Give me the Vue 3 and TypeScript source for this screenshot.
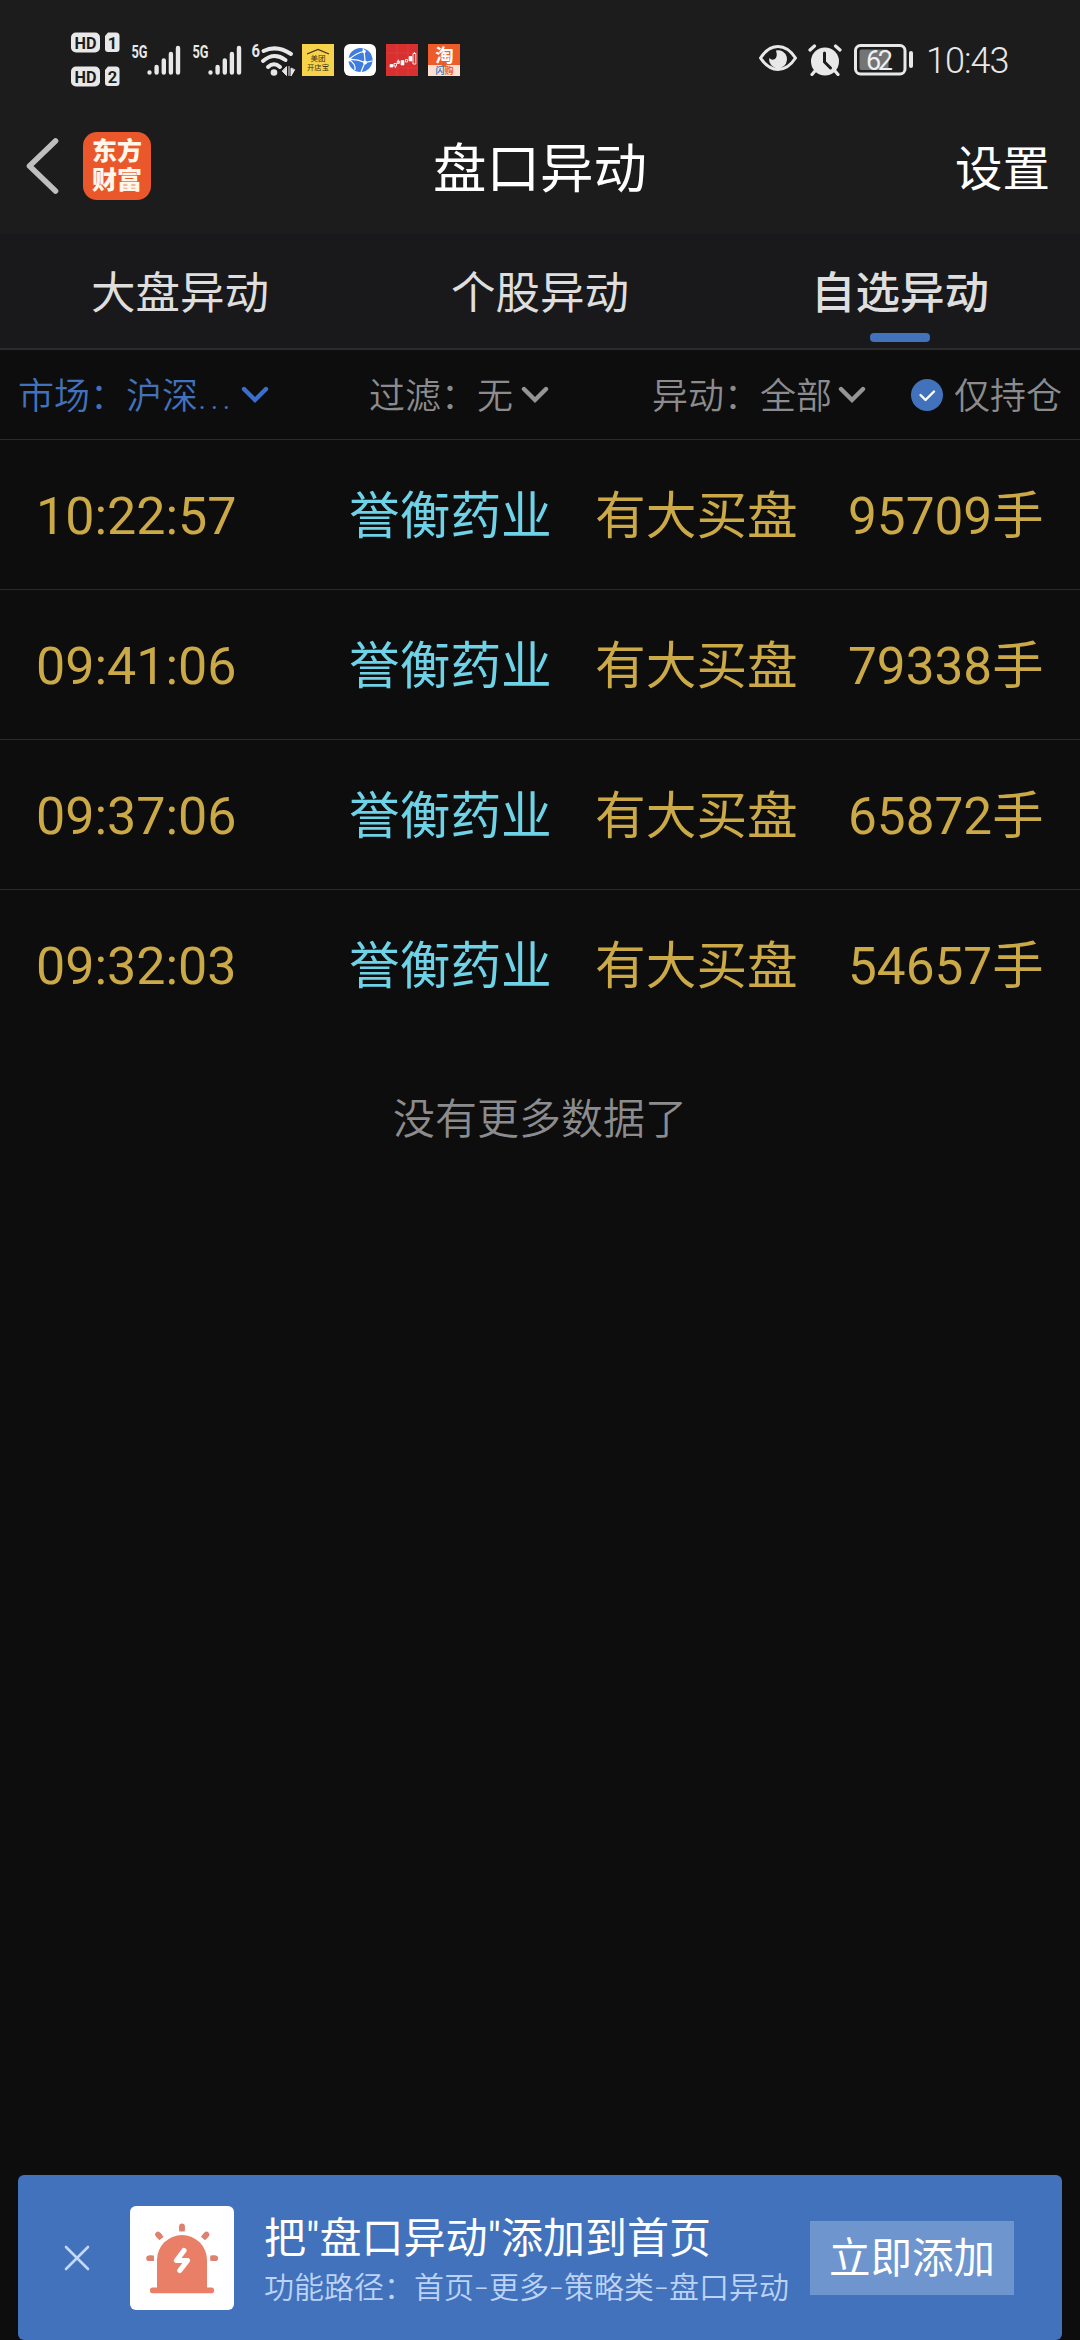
<script setup lang="ts">
interface Alert {
  time: string
  name: string
  kind: string
  volume: string
}

const tabs: string[] = ['大盘异动', '个股异动', '自选异动']
const activeTab = 2

const alerts: Alert[] = [
  { time: '10:22:57', name: '誉衡药业', kind: '有大买盘', volume: '95709手' },
  { time: '09:41:06', name: '誉衡药业', kind: '有大买盘', volume: '79338手' },
  { time: '09:37:06', name: '誉衡药业', kind: '有大买盘', volume: '65872手' },
  { time: '09:32:03', name: '誉衡药业', kind: '有大买盘', volume: '54657手' },
]
</script>

<template>
  <div class="screen">
    <div class="status">
      <svg class="sims" width="50" height="56" viewBox="0 0 50 56">
        <rect x="0" y="0.5" width="29" height="20" rx="5" />
        <path d="M34 4l3-3.500h8q3.500 0 3.500 3.500v13q0 3-3 3H37q-3 0-3-3z" />
        <rect x="0" y="34.500" width="29" height="20" rx="5" />
        <path d="M34 38l3-3.500h8q3.500 0 3.500 3.500v13q0 3-3 3H37q-3 0-3-3z" />
        <text x="14.500" y="16.500" textLength="22" lengthAdjust="spacingAndGlyphs">HD</text>
        <text x="41.500" y="16.500">1</text>
        <text x="14.500" y="50.500" textLength="22" lengthAdjust="spacingAndGlyphs">HD</text>
        <text x="41.500" y="50.500">2</text>
      </svg>
      <svg v-for="n in 2" :key="n" class="signal" width="61" height="40" viewBox="0 -6 61 40">
        <text x="0.5" y="15" textLength="16" lengthAdjust="spacingAndGlyphs">5G</text>
        <path d="M18.500 30.400v.1M25.600 25v5.500M32.800 18.500v12M39.900 12v18.500M47 6v24.500" />
      </svg>
      <svg class="wifi" width="46" height="40" viewBox="0 -6 46 40">
        <text x="0.5" y="14" textLength="8.500" lengthAdjust="spacingAndGlyphs">6</text>
        <path d="M12.500 8Q26 1.500 40 11M12 18Q23 8.500 34.500 17M17 24Q23 18.500 29 24" />
        <circle cx="23" cy="29.500" r="3.300" />
        <path class="arrows" d="M35.500 24v8.500l-4-4.200zM38 23.500v9M40 25.500v7.500l3.500-6z" />
      </svg>
      <div class="apps">
        <svg width="32" height="32" viewBox="0 0 32 32">
          <rect width="32" height="32" fill="#f7d34b" />
          <path d="M5 10L16 5.500L27 10" fill="none" stroke="#433413" stroke-width="1.300" />
          <g fill="#433413" font-size="7.200">
            <text x="8.500" y="17.200" textLength="15" lengthAdjust="spacingAndGlyphs">美团</text>
            <text x="5" y="25.500" textLength="22" lengthAdjust="spacingAndGlyphs">开店宝</text>
          </g>
        </svg>
        <svg width="32" height="32" viewBox="0 0 32 32">
          <rect width="32" height="32" rx="6" fill="#fff" />
          <circle cx="16.500" cy="16" r="12" fill="#3f7de0" />
          <path d="M19 4.500L20 7.500Q21 14 21 18.500L17 28M5 15.500Q13 15 21 18.500L28 17M20 7.500Q12 9 5 15.500Q12 20 11 26" fill="none" stroke="#fff" stroke-width="1.200" />
          <circle cx="20" cy="7.500" r="1.800" fill="#fff" />
          <circle cx="5.500" cy="15.500" r="2" fill="#fff" />
          <circle cx="21" cy="18.500" r="2" fill="#fff" />
        </svg>
        <svg width="32" height="32" viewBox="0 0 32 32">
          <rect width="32" height="32" fill="#d7302f" />
          <path d="M0 9h32M0 24h32M11 0v32M22 0v32" stroke="#df4b48" stroke-width="0.500" />
          <path d="M4 20.500h3v2.500H4zM12.500 15.500V19M15 16.500h3V21h-3zM23 12.500h3V17h-3z" fill="#fff" stroke="#fff" stroke-width="0.700" />
          <path d="M8 19.500h2.500V22H8zM9.300 22v2M11.300 17h2v2.500h-2zM19.500 15.500h2V18h-2zM27 9.500h2.800v10.500H27zM28.400 8v1.500" fill="none" stroke="#fff" stroke-width="0.900" />
        </svg>
        <svg width="32" height="32" viewBox="0 0 32 32">
          <rect width="32" height="32" fill="#ec5b28" />
          <path d="M0 21h13l3 2l3-2h13v11H0z" fill="#fbe0d2" />
          <g text-anchor="middle" font-weight="700">
            <text x="16.500" y="18" font-size="18.500" fill="#fff">淘</text>
            <text x="12" y="30.300" font-size="9" fill="#4a7fc0">闪</text>
            <text x="21" y="30.300" font-size="9" fill="#e8602c">购</text>
          </g>
        </svg>
      </div>
      <div class="status-right">
        <svg width="38" height="28" viewBox="0 0 38 28">
          <path d="M1.500 14Q9 2.500 19 2.500T36.500 14Q29 25.500 19 25.500T1.500 14z" fill="none" stroke="#e8e8e8" stroke-width="3" />
          <path d="M17 6.500a9 9 0 1 1-6.500 11.500q-.8-2 0-4q2 2.500 5 1.200q3.500-2 1.500-8.700z" fill="#e8e8e8" />
        </svg>
        <svg class="alarm" width="34" height="32" viewBox="0 0 34 32">
          <circle cx="17" cy="17.500" r="14" fill="#e8e8e8" />
          <path d="M2 6L6.500 2M32 6L27.500 2M7 27l-3 3.500M27 27l3 3.500" stroke="#e8e8e8" stroke-width="3.200" stroke-linecap="round" />
          <path d="M16.500 9v9l6 6" fill="none" stroke="#1c1c1c" stroke-width="3" stroke-linecap="round" />
        </svg>
        <svg class="battery" width="60" height="32" viewBox="0 0 60 32">
          <rect x="1.500" y="1.500" width="49.500" height="28.500" rx="5" fill="none" stroke="#e8e8e8" stroke-width="3" />
          <rect x="5.500" y="5.500" width="29" height="20.500" rx="2" fill="#747474" />
          <rect x="55" y="7" width="4" height="17" rx="2" fill="#e8e8e8" />
          <text x="25.500" y="25.500" text-anchor="middle" textLength="27">62</text>
        </svg>
        <span class="clock">10:43</span>
      </div>
    </div>

    <header class="header">
      <div class="header-left">
        <svg class="back" width="33" height="58" viewBox="0 0 33 58">
          <path d="M29.500 4L3.500 29L29.500 54" fill="none" stroke="#bfbfbf" stroke-width="5.600" stroke-linecap="round" stroke-linejoin="round" />
        </svg>
        <div class="logo"><span>东方</span><span>财富</span></div>
      </div>
      <h1 class="title">盘口异动</h1>
      <div class="settings">设置</div>
    </header>

    <nav class="tabs">
      <div v-for="(tab, i) in tabs" :key="tab" class="tab" :class="{ active: i === activeTab }">{{ tab }}</div>
    </nav>

    <div class="filters">
      <div class="filter market">
        <span>市场：沪深<i>...</i></span>
        <svg class="chev" viewBox="0 0 28 18"><path d="M3 3l11 11L25 3" /></svg>
      </div>
      <div class="filter sift">
        <span>过滤：无</span>
        <svg class="chev" viewBox="0 0 28 18"><path d="M3 3l11 11L25 3" /></svg>
      </div>
      <div class="filter change">
        <span>异动：全部</span>
        <svg class="chev" viewBox="0 0 28 18"><path d="M3 3l11 11L25 3" /></svg>
      </div>
      <div class="filter held">
        <svg width="32" height="32" viewBox="0 0 32 32">
          <circle cx="16" cy="16" r="16" fill="#4272bb" />
          <path d="M9.500 16l5 5l8.500-8.500" fill="none" stroke="#fff" stroke-width="2.400" stroke-linecap="round" stroke-linejoin="round" />
        </svg>
        <span>仅持仓</span>
      </div>
    </div>

    <main class="list">
      <div v-for="row in alerts" :key="row.time" class="row">
        <span class="time">{{ row.time }}</span>
        <span class="name">{{ row.name }}</span>
        <span class="kind">{{ row.kind }}</span>
        <span class="volume">{{ row.volume }}</span>
      </div>
      <p class="end">没有更多数据了</p>
    </main>

    <footer class="banner">
      <svg class="close" width="26" height="26" viewBox="0 0 26 26">
        <path d="M2 2l22 22M24 2L2 24" stroke="#c3d8fb" stroke-width="2.600" stroke-linecap="round" />
      </svg>
      <svg class="siren" width="104" height="104" viewBox="0 0 104 104">
        <rect width="104" height="104" rx="6" fill="#fff" />
        <path d="M27 82V54a25 25 0 0 1 50 0v28z" fill="#e97f66" />
        <rect x="20" y="81.500" width="64" height="5.800" rx="2.500" fill="#e97f66" />
        <path d="M52 20.200v5.300M19 52.300h5M80.500 52.300h5M28 28.500l3.500 4M76.500 28.500l-3.500 4" stroke="#de8270" stroke-width="5.600" />
        <path d="M52 20.200v2M19 52.300h2M83 52.300h2.300M28 28.500l1 1M76.500 28.500l-1 1" stroke="#de8270" stroke-width="5.600" stroke-linecap="round" />
        <path d="M54 44.500L46.500 54.500H57.500L49.800 64.500" fill="none" stroke="#fff" stroke-width="5.200" stroke-linecap="round" stroke-linejoin="round" />
      </svg>
      <div class="copy">
        <div class="copy-title">把"盘口异动"添加到首页</div>
        <div class="copy-path">功能路径：首页<b>-</b>更多<b>-</b>策略类<b>-</b>盘口异动</div>
      </div>
      <button class="add">立即添加</button>
    </footer>
  </div>
</template>

<style>
body {
  background: #0d0d0d;
}
</style>

<style scoped>
.screen {
  display: flex;
  flex-direction: column;
  width: 1080px;
  height: 2340px;
  overflow: hidden;
  background: #0d0d0d;
  color: #dedede;
  font-family: Roboto, 'Noto Sans CJK SC', sans-serif;
}
svg {
  display: block;
  flex: none;
}
span {
  white-space: nowrap;
}

.status {
  display: flex;
  align-items: flex-start;
  box-sizing: border-box;
  height: 110px;
  padding: 32px 0 0 71px;
  background: #1c1c1c;
}
.sims rect,
.sims path {
  fill: #e8e8e8;
}
.sims text {
  fill: #1c1c1c;
  font-size: 16.500px;
  font-weight: 700;
  text-anchor: middle;
}
.signal,
.wifi {
  margin-top: 5px;
}
.sims {
  margin-right: 10px;
}
.signal text,
.wifi text {
  fill: #e8e8e8;
  font-size: 18px;
  font-weight: 700;
}
.signal path {
  stroke: #e8e8e8;
  stroke-width: 4.400;
  stroke-linecap: round;
  transform: translateY(-1px);
}
.wifi {
  margin-left: -2px;
}
.wifi path {
  fill: none;
  stroke: #e8e8e8;
  stroke-width: 4;
  stroke-linecap: round;
}
.wifi circle {
  fill: #e8e8e8;
}
.wifi .arrows {
  fill: #e8e8e8;
  stroke-width: 1;
}
.apps {
  display: flex;
  gap: 10px;
  margin: 12px 0 0 5px;
}
.status-right {
  display: flex;
  margin: 12px 72px 0 auto;
}
.alarm {
  margin-left: 11px;
}
.battery {
  margin-left: 12px;
}
.battery text {
  fill: #efefef;
  font-size: 27px;
}
.clock {
  width: 82px;
  margin-left: 12px;
  color: #e8e8e8;
  font-size: 36px;
  font-weight: 350;
  line-height: 34px;
  letter-spacing: -1px;
}

.header {
  display: grid;
  grid-template-columns: 1fr auto 1fr;
  align-items: center;
  height: 124px;
  background: #1c1c1c;
  color: #fff;
}
.header-left {
  display: flex;
  align-items: center;
  margin-top: -12px;
}
.back {
  margin-left: 26px;
}
.logo {
  display: flex;
  flex-direction: column;
  align-items: center;
  justify-content: center;
  width: 68px;
  height: 68px;
  margin-left: 24px;
  border-radius: 14px;
  background: #e9572a;
  color: #fff8ea;
  font-size: 25px;
  font-weight: 900;
  line-height: 29px;
}
.title {
  margin: 0 0 4px;
  font-size: 53.500px;
  font-weight: 400;
  line-height: 60px;
}
.settings {
  margin: 0 30px 4px 0;
  font-size: 47.500px;
  line-height: 60px;
  text-align: right;
}

.tabs {
  display: flex;
  height: 114px;
  border-bottom: 2px solid #2b2b2b;
  background: #19191b;
}
.tab {
  position: relative;
  flex: 1;
  font-size: 44.500px;
  line-height: 120px;
  text-align: center;
}
.tab.active {
  font-weight: 500;
}
.tab.active::after {
  content: '';
  position: absolute;
  left: 150px;
  bottom: 6px;
  width: 60px;
  height: 9px;
  border-radius: 4px;
  background: #4272bb;
}

.filters {
  display: flex;
  height: 89px;
  border-bottom: 1px solid #2b2b2b;
  color: #8c8c8e;
  font-size: 36px;
  font-weight: 350;
}
.filter {
  display: flex;
  align-items: center;
}
.filter span {
  margin-bottom: 3px;
}
.chev {
  width: 28px;
  height: 18px;
}
.chev path {
  fill: none;
  stroke: #959597;
  stroke-width: 4.400;
  stroke-linecap: round;
}
.market {
  width: 351px;
  padding-left: 18px;
  color: #4272bb;
}
.market i {
  font-style: normal;
  letter-spacing: 3.500px;
}
.market .chev {
  margin-left: 7px;
}
.market .chev path {
  stroke: #3a70cc;
}
.sift {
  width: 283px;
}
.sift .chev {
  margin-left: 8px;
}
.change {
  width: 259px;
}
.change .chev {
  margin-left: 6px;
}
.held span {
  margin-left: 11px;
}

.list {
  flex: 1;
}
.row {
  display: flex;
  box-sizing: border-box;
  height: 150px;
  border-bottom: 1px solid #2b2b2b;
  color: #cba947;
  font-size: 50.700px;
  line-height: 153px;
}
.row:nth-last-child(2) {
  border-bottom-color: transparent;
}
.time {
  width: 313px;
  padding-left: 36px;
  font-size: 52px;
}
.name {
  width: 246px;
  color: #6fd3e8;
}
.kind {
  width: 253px;
}
.volume {
  flex: 1;
  font-size: 51.300px;
}
.end {
  margin: 54px 0 0;
  color: #8c8c8e;
  font-size: 42px;
  font-weight: 350;
  line-height: 52px;
  text-align: center;
}

.banner {
  display: flex;
  align-items: center;
  box-sizing: border-box;
  height: 165px;
  margin: 0 18px;
  border-radius: 6px;
  background: #4272bb;
  color: #fff;
}
.close {
  margin-left: 46px;
}
.siren {
  margin-left: 40px;
}
.copy {
  flex: 1;
  margin-left: 30px;
  padding-top: 5px;
  white-space: nowrap;
}
.copy-title {
  font-size: 42px;
  line-height: 54px;
}
.copy-path {
  color: #bcd2f7;
  font-size: 30px;
  font-weight: 350;
  line-height: 43px;
}
.copy-path b {
  display: inline-block;
  width: 15px;
  font-weight: 350;
  text-align: center;
  transform: scaleX(1.5);
}
.add {
  width: 204px;
  height: 74px;
  margin-right: 48px;
  padding: 0;
  border: 0;
  background: #6e95cd;
  color: #fff;
  font: 400 41.500px/75px Roboto, 'Noto Sans CJK SC', sans-serif;
}
</style>
